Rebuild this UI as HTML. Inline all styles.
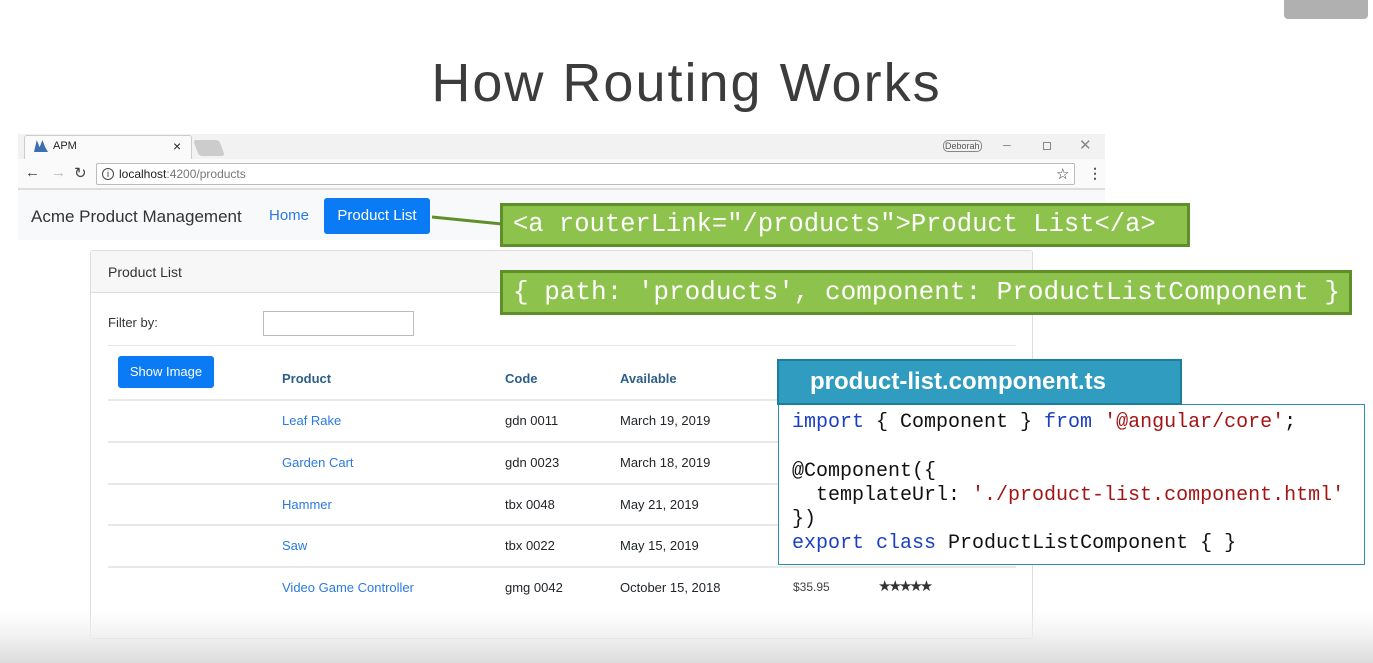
<!DOCTYPE html>
<html><head><meta charset="utf-8"><style>
*{margin:0;padding:0;box-sizing:border-box}
body{width:1373px;height:663px;overflow:hidden;background:#fff;position:relative;font-family:"Liberation Sans",sans-serif;color:#212529}
.a{position:absolute}
.t{font-size:13px;white-space:nowrap}
.link{color:#2a7ae2}
.line{position:absolute;left:108px;width:908px;height:2px;background:#e8e8e8}
.mono{font-family:"Liberation Mono",monospace;white-space:pre}
</style></head><body>
<div class="a" style="left:1284px;top:0;width:84px;height:19px;background:#b0b0b0;border-radius:0 0 4px 4px"></div>
<div class="a" style="left:0;top:52px;width:1373px;text-align:center;font-size:54px;color:#3c3c3c;letter-spacing:2px">How Routing Works</div>

<!-- browser -->
<div class="a" style="left:18px;top:134px;width:1087px;height:56px;background:#f2f2f2;border-bottom:2px solid #ddd"></div>
<div class="a" style="left:24px;top:135px;width:168px;height:24px;background:#fafafa;border:1px solid #ccc;border-bottom:none;border-radius:3px 3px 0 0"></div>
<div class="a" style="left:196px;top:140px;width:26px;height:16px;background:#ccc;border-radius:3px;transform:skewX(20deg)"></div>
<div class="a" style="left:34px;top:140px;width:14px;height:12px;background:#3b6fb0;clip-path:polygon(0 100%,20% 0,40% 60%,60% 0,80% 60%,100% 100%)"></div>
<div class="a t" style="left:53px;top:140px;font-size:11px">APM</div>
<div class="a t" style="left:173px;top:138px;font-size:14px">×</div>
<div class="a t" style="left:943px;top:140px;font-size:9px;color:#555;border:1px solid #888;border-radius:5px;padding:0 1px">Deborah</div>
<div class="a t" style="left:1003px;top:136px;font-size:14px;color:#888">–</div>
<div class="a" style="left:1043px;top:142px;width:8px;height:8px;border:1px solid #888"></div>
<div class="a t" style="left:1079px;top:136px;font-size:15px;color:#888">✕</div>
<div class="a" style="left:18px;top:159px;width:1087px;height:29px;background:#fafafa"></div>
<div class="a t" style="left:25px;top:164px;font-size:15px;color:#444">←</div>
<div class="a t" style="left:51px;top:164px;font-size:15px;color:#bbb">→</div>
<div class="a t" style="left:74px;top:164px;font-size:15px;color:#444">↻</div>
<div class="a" style="left:96px;top:163px;width:979px;height:22px;background:#fff;border:1px solid #bbb;border-radius:2px"></div>
<div class="a" style="left:102px;top:168px;width:12px;height:12px;border:1px solid #444;border-radius:50%;font-size:9px;text-align:center;line-height:10px">i</div>
<div class="a t" style="left:119px;top:167px;font-size:12px;color:#222">localhost<span style="color:#777">:4200/products</span></div>
<div class="a t" style="left:1056px;top:165px;font-size:15px;color:#333">☆</div>
<div class="a t" style="left:1088px;top:165px;font-size:14px;color:#555;font-weight:bold">⋮</div>

<!-- navbar -->
<div class="a" style="left:18px;top:190px;width:1087px;height:50px;background:#f8f9fa"></div>
<div class="a t" style="left:31px;top:207px;font-size:17px;color:#333">Acme Product Management</div>
<div class="a t" style="left:269px;top:207px;font-size:15px;color:#2a7ae2">Home</div>
<div class="a" style="left:324px;top:198px;width:106px;height:36px;background:#0a7bf5;border-radius:3px;color:#fff;font-size:15px;text-align:center;line-height:36px">Product List</div>
<svg class="a" style="left:430px;top:210px" width="75" height="20"><path d="M2 7 L72 14" stroke="#5f8f2a" stroke-width="3"/></svg>

<!-- card -->
<div class="a" style="left:90px;top:250px;width:943px;height:389px;border:1px solid #ddd;border-radius:3px"></div>
<div class="a" style="left:91px;top:251px;width:941px;height:42px;background:#f7f7f7;border-bottom:1px solid #ddd"></div>
<div class="a t" style="left:108px;top:264px;font-size:14px;color:#333">Product List</div>
<div class="a t" style="left:108px;top:315px;color:#333">Filter by:</div>
<div class="a" style="left:263px;top:311px;width:151px;height:25px;border:1px solid #bbb"></div>
<div class="line" style="top:345px;height:1px"></div>
<div class="a" style="left:118px;top:356px;width:96px;height:32px;background:#0a7bf5;border-radius:3px;color:#fff;font-size:13px;text-align:center;line-height:32px">Show Image</div>
<div class="a t" style="left:282px;top:371px;font-weight:bold;color:#2c5f8a">Product</div>
<div class="a t" style="left:505px;top:371px;font-weight:bold;color:#2c5f8a">Code</div>
<div class="a t" style="left:620px;top:371px;font-weight:bold;color:#2c5f8a">Available</div>
<div class="line" style="top:399px"></div>
<div class="a t link" style="left:282px;top:413px">Leaf Rake</div><div class="a t" style="left:505px;top:413px">gdn 0011</div><div class="a t" style="left:620px;top:413px">March 19, 2019</div>
<div class="line" style="top:441px"></div>
<div class="a t link" style="left:282px;top:455px">Garden Cart</div><div class="a t" style="left:505px;top:455px">gdn 0023</div><div class="a t" style="left:620px;top:455px">March 18, 2019</div>
<div class="line" style="top:483px"></div>
<div class="a t link" style="left:282px;top:497px">Hammer</div><div class="a t" style="left:505px;top:497px">tbx 0048</div><div class="a t" style="left:620px;top:497px">May 21, 2019</div>
<div class="line" style="top:524px"></div>
<div class="a t link" style="left:282px;top:538px">Saw</div><div class="a t" style="left:505px;top:538px">tbx 0022</div><div class="a t" style="left:620px;top:538px">May 15, 2019</div>
<div class="line" style="top:566px"></div>
<div class="a t link" style="left:282px;top:580px">Video Game Controller</div><div class="a t" style="left:505px;top:580px">gmg 0042</div><div class="a t" style="left:620px;top:580px">October 15, 2018</div>
<div class="a t" style="left:793px;top:580px;font-size:12px;color:#444">$35.95</div>
<div class="a t" style="left:878px;top:577px;font-size:15px;color:#333;letter-spacing:-3px">★★★★★</div>

<!-- green boxes -->
<div class="a mono" style="left:500px;top:203px;width:690px;height:44px;background:#8dc24c;border:3px solid #5f8f2a;color:#fff;font-size:25.5px;line-height:38px;padding-left:10px">&lt;a routerLink="/products"&gt;Product List&lt;/a&gt;</div>
<div class="a mono" style="left:500px;top:270px;width:852px;height:45px;background:#8dc24c;border:3px solid #5f8f2a;color:#fff;font-size:26px;line-height:39px;padding-left:10px">{ path: 'products', component: ProductListComponent }</div>

<!-- code -->
<div class="a" style="left:778px;top:404px;width:587px;height:161px;background:#fff;border:1.5px solid #2a8fae"></div>
<div class="a" style="left:777px;top:359px;width:405px;height:46px;background:#2f9cc0;border:2px solid #1d7d9c;color:#fff;font-size:24px;font-weight:bold;line-height:42px;padding-left:31px">product-list.component.ts</div>
<div class="a mono" style="left:792px;top:411px;font-size:20px;line-height:24.3px;color:#111"><span style="color:#1a3fc4">import</span> { Component } <span style="color:#1a3fc4">from</span> <span style="color:#a31515">'@angular/core'</span>;

@Component({
  templateUrl: <span style="color:#a31515">'./product-list.component.html'</span>
})
<span style="color:#1a3fc4">export</span> <span style="color:#1a3fc4">class</span> ProductListComponent { }</div>

<div class="a" style="left:0;top:610px;width:1373px;height:53px;background:linear-gradient(#ffffff00,#f0f0f0b0 40%,#dcdcdc)"></div>
</body></html>
